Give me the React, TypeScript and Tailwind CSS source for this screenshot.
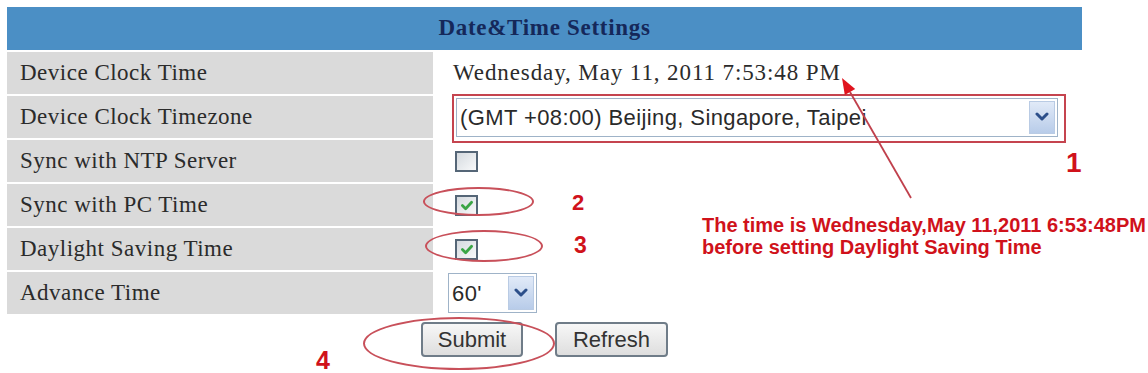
import React from "react";

const serif = { fontFamily: '"Liberation Serif", "Times New Roman", serif' };
const sans = { fontFamily: '"Liberation Sans", Arial, sans-serif' };

function Chevron() {
  return (
    <svg width="14" height="10" viewBox="0 0 14 10">
      <path d="M2 2 L7 7 L12 2" fill="none" stroke="#2c4f8a" strokeWidth="3" strokeLinecap="round" strokeLinejoin="round" />
    </svg>
  );
}

function SelectBox({ text, className }: { text: string; className: string }) {
  return (
    <div className={`flex items-center border border-[#9fb3c8] bg-white ${className}`}>
      <span className="flex-1 pl-[3px] text-[22px] tracking-[0.4px] text-[#2a2a2a] whitespace-nowrap" style={sans}>
        {text}
      </span>
      <div className="mr-[2px] flex h-[calc(100%-4px)] w-[26px] items-center justify-center border border-[#b9cbe4] bg-gradient-to-b from-[#e1eaf8] to-[#b8cce9]">
        <Chevron />
      </div>
    </div>
  );
}

function Checkbox({ checked }: { checked?: boolean }) {
  return (
    <div className="ml-[22px] flex h-[21px] w-[23px] items-center justify-center border-2 border-[#556677] bg-gradient-to-br from-[#d5dadf] to-[#f8f9fa]">
      {checked && (
        <svg width="14" height="12" viewBox="0 0 15 13">
          <path d="M2.5 7 L6 10.5 L12.5 3.5" fill="none" stroke="#3aa545" strokeWidth="3" strokeLinecap="round" strokeLinejoin="round" />
        </svg>
      )}
    </div>
  );
}

function Row({ label, children }: { label: string; children?: React.ReactNode }) {
  return (
    <div className="mt-[2px] flex h-[42px]">
      <div
        className="flex w-[426px] items-center bg-[#dadada] pl-[13px] text-[23px] tracking-[0.5px] text-[#2b2b2b]"
        style={serif}
      >
        {label}
      </div>
      <div className="relative flex flex-1 items-center">{children}</div>
    </div>
  );
}

function Button({ label }: { label: string }) {
  return (
    <button
      className="flex h-[35px] w-full items-center justify-center rounded-[4px] border-2 border-[#6f7c88] bg-gradient-to-b from-[#f7f7f7] to-[#dedede] text-[22px] text-[#333]"
      style={sans}
    >
      {label}
    </button>
  );
}

export default function App() {
  return (
    <div className="relative h-[373px] w-[1148px] overflow-hidden bg-white">
      <div className="w-[1082px] pl-[7px] pt-[7px]">
        <div
          className="flex h-[43px] items-center justify-center bg-[#4b8fc5] text-[23px] font-bold tracking-[0.7px] text-[#15285a]"
          style={serif}
        >
          Date&amp;Time Settings
        </div>
        <Row label="Device Clock Time">
          <span className="pl-[20px] text-[23px] tracking-[0.9px] text-[#2b2b2b]" style={serif}>
            Wednesday, May 11, 2011 7:53:48 PM
          </span>
        </Row>
        <Row label="Device Clock Timezone">
          <SelectBox text="(GMT +08:00) Beijing, Singapore, Taipei" className="ml-[23px] h-[39px] w-[602px]" />
          <div className="pointer-events-none absolute left-[19px] top-[-2px] h-[49px] w-[614px] border-2 border-[#c5444f]" />
        </Row>
        <Row label="Sync with NTP Server">
          <Checkbox />
        </Row>
        <Row label="Sync with PC Time">
          <Checkbox checked />
        </Row>
        <Row label="Daylight Saving Time">
          <Checkbox checked />
        </Row>
        <Row label="Advance Time">
          <SelectBox text="60'" className="ml-[15px] h-[40px] w-[89px]" />
        </Row>
      </div>

      <div className="mt-[8px] flex w-[1089px] justify-center gap-[32px]">
        <div className="w-[102px]">
          <Button label="Submit" />
        </div>
        <div className="w-[113px]">
          <Button label="Refresh" />
        </div>
      </div>

      {/* annotations */}
      <div className="pointer-events-none absolute left-[423px] top-[187px] h-[29px] w-[111px] rounded-[50%] border-2 border-[#c8505a]" />
      <div className="pointer-events-none absolute left-[425px] top-[230px] h-[32px] w-[118px] rounded-[50%] border-2 border-[#c8505a]" />
      <div className="pointer-events-none absolute left-[363px] top-[317px] h-[53px] w-[192px] rounded-[50%] border-2 border-[#c8505a]" />

      <span className="absolute left-[1066px] top-[149px] text-[28px] font-bold leading-none text-[#d0121b]" style={sans}>1</span>
      <span className="absolute left-[572px] top-[192px] text-[22px] font-bold leading-none text-[#d0121b]" style={sans}>2</span>
      <span className="absolute left-[574px] top-[234px] text-[23px] font-bold leading-none text-[#d0121b]" style={sans}>3</span>
      <span className="absolute left-[316px] top-[348px] text-[25px] font-bold leading-none text-[#d0121b]" style={sans}>4</span>

      <div className="absolute left-[702px] top-[214px] text-[20px] font-bold leading-[22px] text-[#d0121b]" style={sans}>
        <div>The time is Wednesday,May 11,2011 6:53:48PM</div>
        <div>before setting Daylight Saving Time</div>
      </div>

      <svg className="pointer-events-none absolute left-0 top-0" width="1148" height="373">
        <line x1="911" y1="198" x2="850" y2="92" stroke="#c0404c" strokeWidth="1.8" />
        <polygon points="842,78 844.8,94.9 855.2,88.9" fill="#e0141e" />
      </svg>
    </div>
  );
}
